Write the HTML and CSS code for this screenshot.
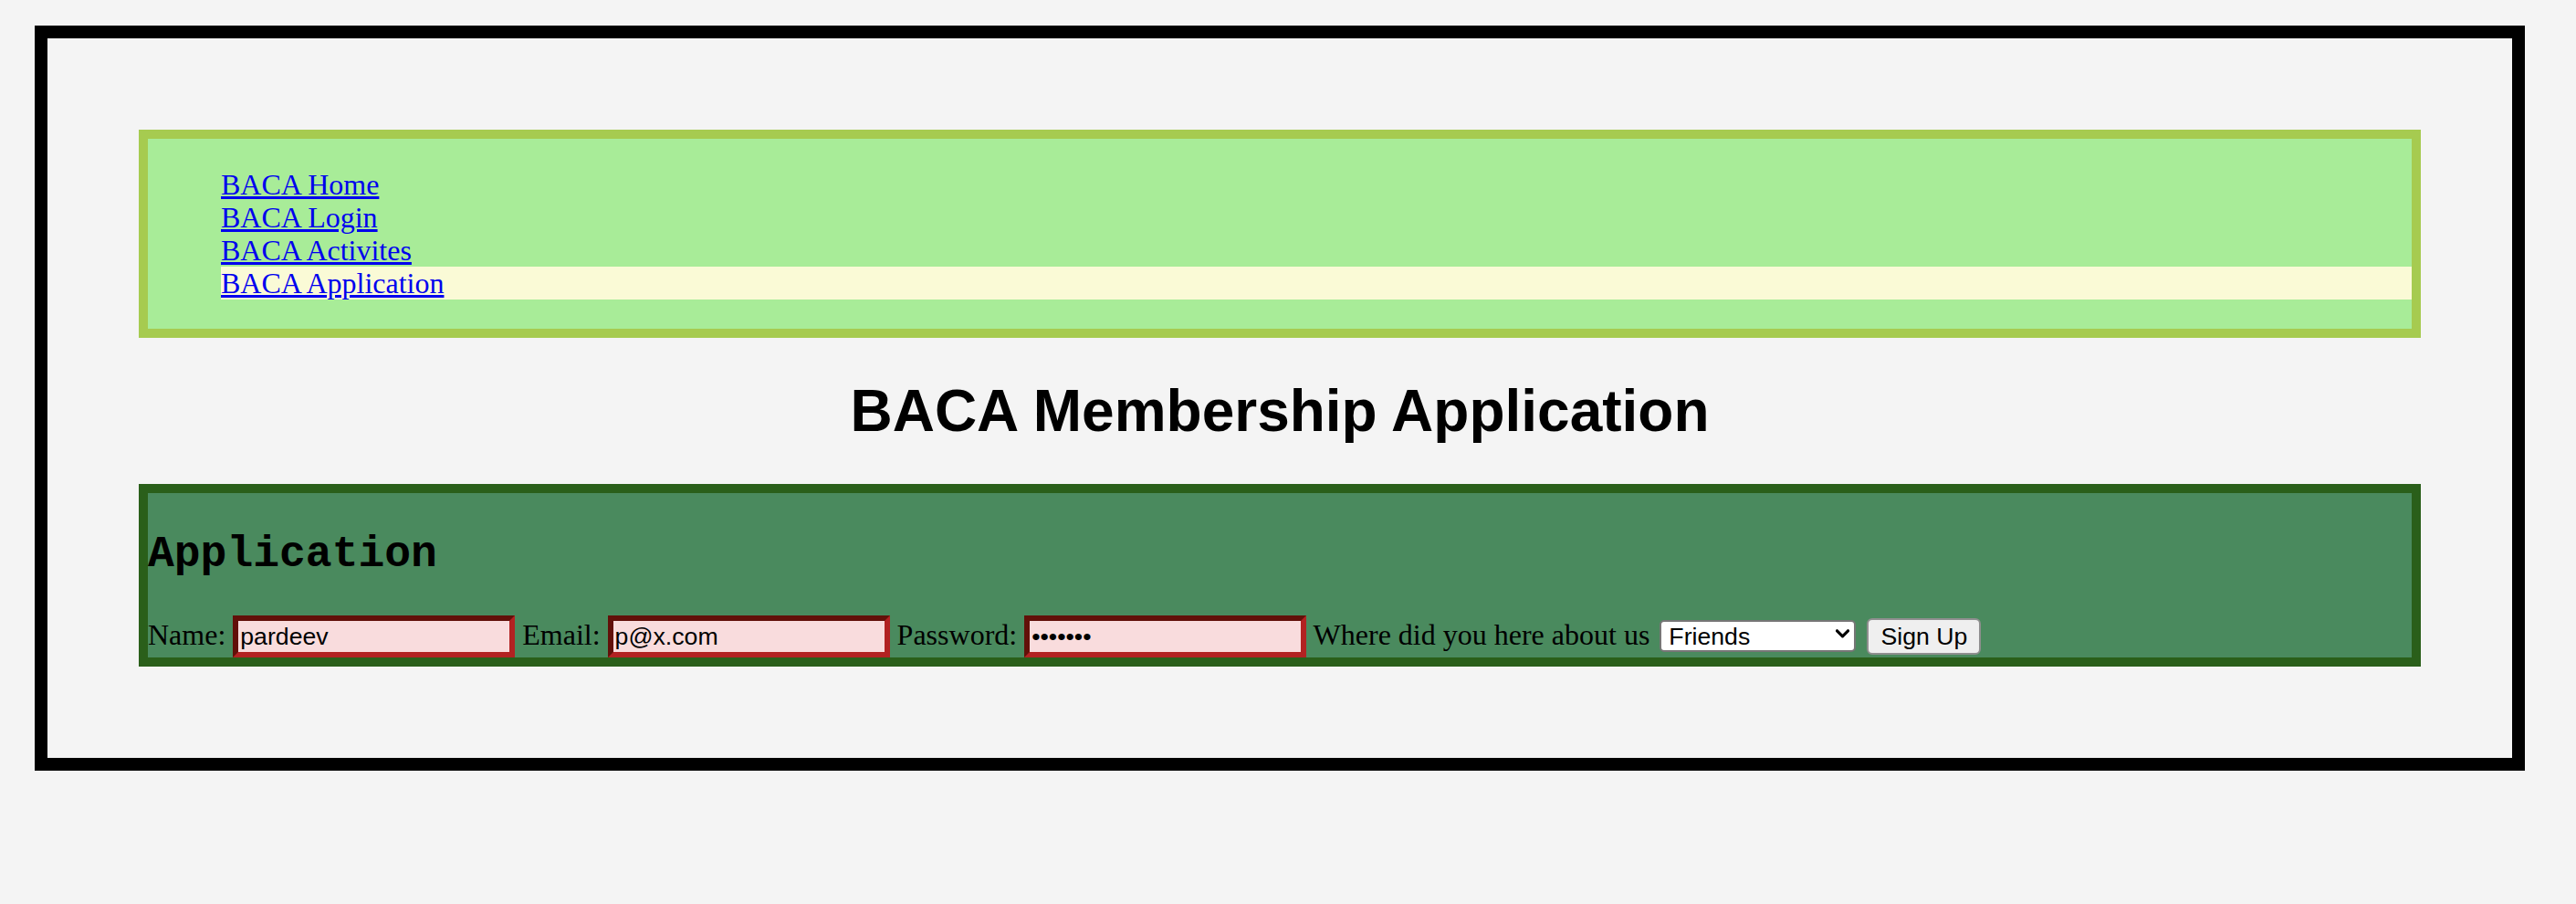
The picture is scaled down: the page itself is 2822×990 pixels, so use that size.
FILE: index.html
```html
<!DOCTYPE html>
<html lang="en">
<head>
<meta charset="utf-8">
<title>BACA Membership Application</title>
<link rel="stylesheet" href="styles.css">
</head>
<body>
<div class="frame">
  <nav class="nav">
    <ul class="nav-list">
      <li><a href="#">BACA Home</a></li>
      <li><a href="#">BACA Login</a></li>
      <li><a href="#">BACA Activites</a></li>
      <li class="current"><a href="#">BACA Application</a></li>
    </ul>
  </nav>
  <h1 class="title">BACA Membership Application</h1>
  <section class="app">
    <h2 class="app-title">Application</h2>
    <form class="app-row">Name: <input class="field" type="text" value="pardeev"> Email: <input class="field" type="text" value="p@x.com"> Password: <input class="field" type="password" value="1234567"> Where did you here about us <span class="select-wrap"><select class="source"><option>Friends</option><option>Internet</option><option>Other</option></select><svg class="chevron" width="15" height="10" viewBox="0 0 15 10" aria-hidden="true"><path d="M1.5 1.8 L7.5 7.8 L13.5 1.8" fill="none" stroke="#000" stroke-width="3.2" stroke-linecap="round" stroke-linejoin="round"/></svg></span> <button class="submit" type="button">Sign Up</button></form>
  </section>
</div>
</body>
</html>
```

FILE: styles.css
```css
html, body {
  margin: 0;
  padding: 0;
  background: #f4f4f4;
}

body {
  padding: 28px 0 0 38px;
  font-family: "Liberation Serif", "Times New Roman", serif;
  font-size: 32px;
  color: #000;
}

.frame {
  width: 2500px;
  padding: 100px;
  border: 14px solid #000;
}

.nav {
  background: #a8ec98;
  border: 10px solid #a6cb50;
}

.nav-list {
  list-style: none;
  margin: 32px 0;
  padding: 0 0 0 80px;
}

.nav-list li {
  font-size: 32px;
  line-height: 36px;
}

.nav-list li.current {
  background: #fafad6;
}

.nav-list a {
  color: #0000ee;
  text-decoration: underline;
}

.title {
  margin: 43px 0;
  font-family: "Liberation Sans", Arial, sans-serif;
  font-weight: bold;
  font-size: 64px;
  line-height: 74px;
  text-align: center;
}

.app {
  background: #4a8a5e;
  border: 10px solid #2a5f1a;
}

.app-title {
  margin: 40px 0;
  font-family: "Liberation Mono", "Courier New", monospace;
  font-weight: bold;
  font-size: 48px;
  line-height: 54px;
}

.app-row {
  margin: 0;
  font-family: "Liberation Serif", "Times New Roman", serif;
  font-size: 32px;
}

.field {
  box-sizing: border-box;
  width: 309px;
  height: 46px;
  margin: 0;
  padding: 2px;
  border: 6px solid;
  border-color: #621009 #b22222 #b22222 #621009;
  background: #f9dcdd;
  font-family: "Liberation Sans", Arial, sans-serif;
  font-size: 26.67px;
  color: #000;
  outline: none;
}

.select-wrap {
  position: relative;
  display: inline-block;
  margin: 0 2px 0 3px;
}

.source {
  box-sizing: border-box;
  width: 215px;
  height: 35px;
  margin: 0;
  padding: 0 30px 0 8px;
  border: 2px solid #767676;
  border-radius: 5px;
  background-color: #fff;
  font-family: "Liberation Sans", Arial, sans-serif;
  font-size: 26.67px;
  color: #000;
  -webkit-appearance: none;
  appearance: none;
}

.chevron {
  position: absolute;
  right: 7px;
  top: 12px;
  pointer-events: none;
}

.submit {
  box-sizing: border-box;
  width: 125px;
  height: 40px;
  margin: 0 0 0 2px;
  padding: 0 12px;
  border: 2px solid #8f8f8f;
  border-radius: 6px;
  background: #efefef;
  font-family: "Liberation Sans", Arial, sans-serif;
  font-size: 26.67px;
  color: #000;
}
```
